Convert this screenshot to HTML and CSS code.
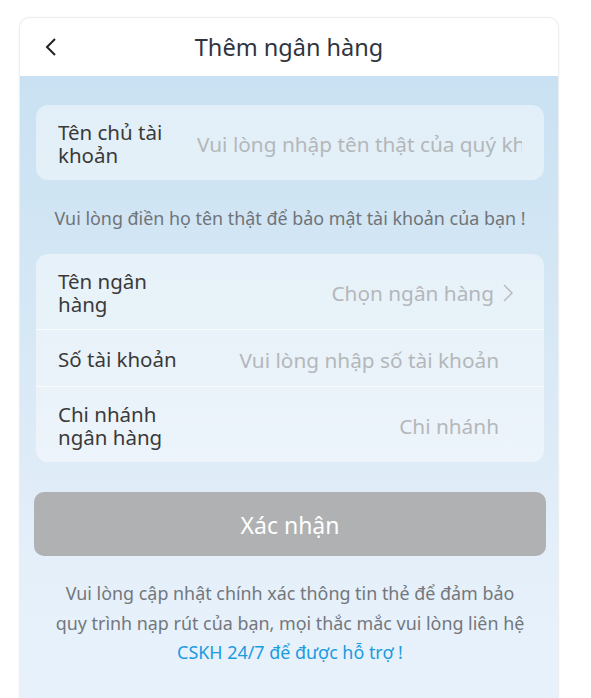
FILE: index.html
```html
<!DOCTYPE html>
<html>
<head>
    <meta charset="utf-8">
    <title>Thêm ngân hàng</title>
    <link rel="stylesheet" href="styles.css">
</head>
<body>

    <div class="phone">
        <div class="nav-bar">
            <span class="back">
                <svg width="14" height="20" viewBox="0 0 14 20"><path d="M11 2 L3 10 L11 18" fill="none" stroke="#222" stroke-width="2"/></svg>
            </span>
            <div class="nav-title">Thêm ngân hàng</div>
        </div>

        <div class="page">
            <div class="card">
                <div class="row row-tall">
                    <label class="row-label">Tên chủ tài khoản</label>
                    <input class="row-input" type="text" placeholder="Vui lòng nhập tên thật của quý khách">
                </div>
            </div>

            <p class="hint">Vui lòng điền họ tên thật để bảo mật tài khoản của bạn !</p>

            <div class="card">
                <div class="row row-tall">
                    <label class="row-label">Tên ngân hàng</label>
                    <div class="row-select">
                        Chọn ngân hàng
                        <svg width="12" height="20" viewBox="0 0 12 20"><path d="M2 2 L10 10 L2 18" fill="none" stroke="#bbb" stroke-width="1.5"/></svg>
                    </div>
                </div>
                <div class="row">
                    <label class="row-label">Số tài khoản</label>
                    <input class="row-input right" type="text" placeholder="Vui lòng nhập số tài khoản">
                </div>
                <div class="row row-tall">
                    <label class="row-label">Chi nhánh ngân hàng</label>
                    <input class="row-input right" type="text" placeholder="Chi nhánh">
                </div>
            </div>

            <button class="submit">Xác nhận</button>

            <p class="note">
                Vui lòng cập nhật chính xác thông tin thẻ để đảm bảo<br>
                quy trình nạp rút của bạn, mọi thắc mắc vui lòng liên hệ<br>
                <a class="support">CSKH 24/7 để được hỗ trợ !</a>
            </p>
        </div>
    </div>

</body>
</html>
```

FILE: styles.css
```css
body, html {
    margin: 0;
    height: 100%;
    background: #fff;
    font-family: "Noto Sans", "Open Sans", sans-serif;
}

body {
    padding: 17px 0 0 19px;
    box-sizing: border-box;
    overflow: hidden;
}

.phone {
    width: 538px;
    height: 700px;
    border: 1px solid #eceef0;
    border-bottom: none;
    border-radius: 11px 11px 0 0;
    overflow: hidden;
    box-shadow: 0 0 3px rgba(0, 0, 0, 0.04);
}

.nav-bar {
    position: relative;
    height: 58px;
    background: #fff;
    display: flex;
    align-items: center;
    justify-content: center;
}

.back {
    position: absolute;
    left: 24px;
    top: 19px;
}

.nav-title {
    font-size: 23.5px;
    color: #2f3540;
}

.page {
    height: 100%;
    padding: 29px 14px 0 16px;
    background: linear-gradient(180deg, #c9e1f2 0%, #dbeaf6 45%, #e7f1fb 75%, #e8f1fc 100%);
}

.card {
    background: rgba(255, 255, 255, 0.45);
    border-radius: 12px;
    overflow: hidden;
}

.row {
    display: flex;
    align-items: center;
    height: 56px;
    padding: 3px 22px 0;
    box-sizing: border-box;
    border-top: 1px solid rgba(255, 255, 255, 0.7);
}

.row:first-child {
    border-top: none;
}

.row-tall {
    height: 75px;
}

.row + .row {
    height: 57px;
}

.row + .row.row-tall {
    height: 76px;
}

.row-label {
    width: 126px;
    flex-shrink: 0;
    font-size: 20.5px;
    line-height: 23px;
    color: #3a3a3a;
}

.row-input {
    flex: 1;
    min-width: 0;
    margin-left: 13px;
    border: none;
    background: transparent;
    outline: none;
    font-family: inherit;
    font-size: 20.8px;
    color: #333;
    padding: 0;
}

.row-input::placeholder {
    color: #b4b7ba;
}

.row-input.right {
    text-align: right;
    margin-right: 23px;
}

.row-select {
    flex: 1;
    display: flex;
    align-items: center;
    justify-content: flex-end;
    gap: 8px;
    font-size: 20.8px;
    color: #b4b7ba;
    padding-right: 8px;
}

.hint {
    margin: 26px 0 24px;
    text-align: center;
    font-size: 17.9px;
    line-height: 24px;
    color: #707478;
}

.submit {
    display: block;
    width: 512px;
    height: 64px;
    margin: 30px 0 0 -2px;
    padding-top: 2px;
    border: none;
    border-radius: 10px;
    background: #b0b1b3;
    color: #fff;
    font-family: inherit;
    font-size: 23px;
}

.note {
    margin: 23px 0 0;
    text-align: center;
    font-size: 17.9px;
    line-height: 29.5px;
    color: #73777c;
}

.support {
    color: #1b9be0;
}
```
